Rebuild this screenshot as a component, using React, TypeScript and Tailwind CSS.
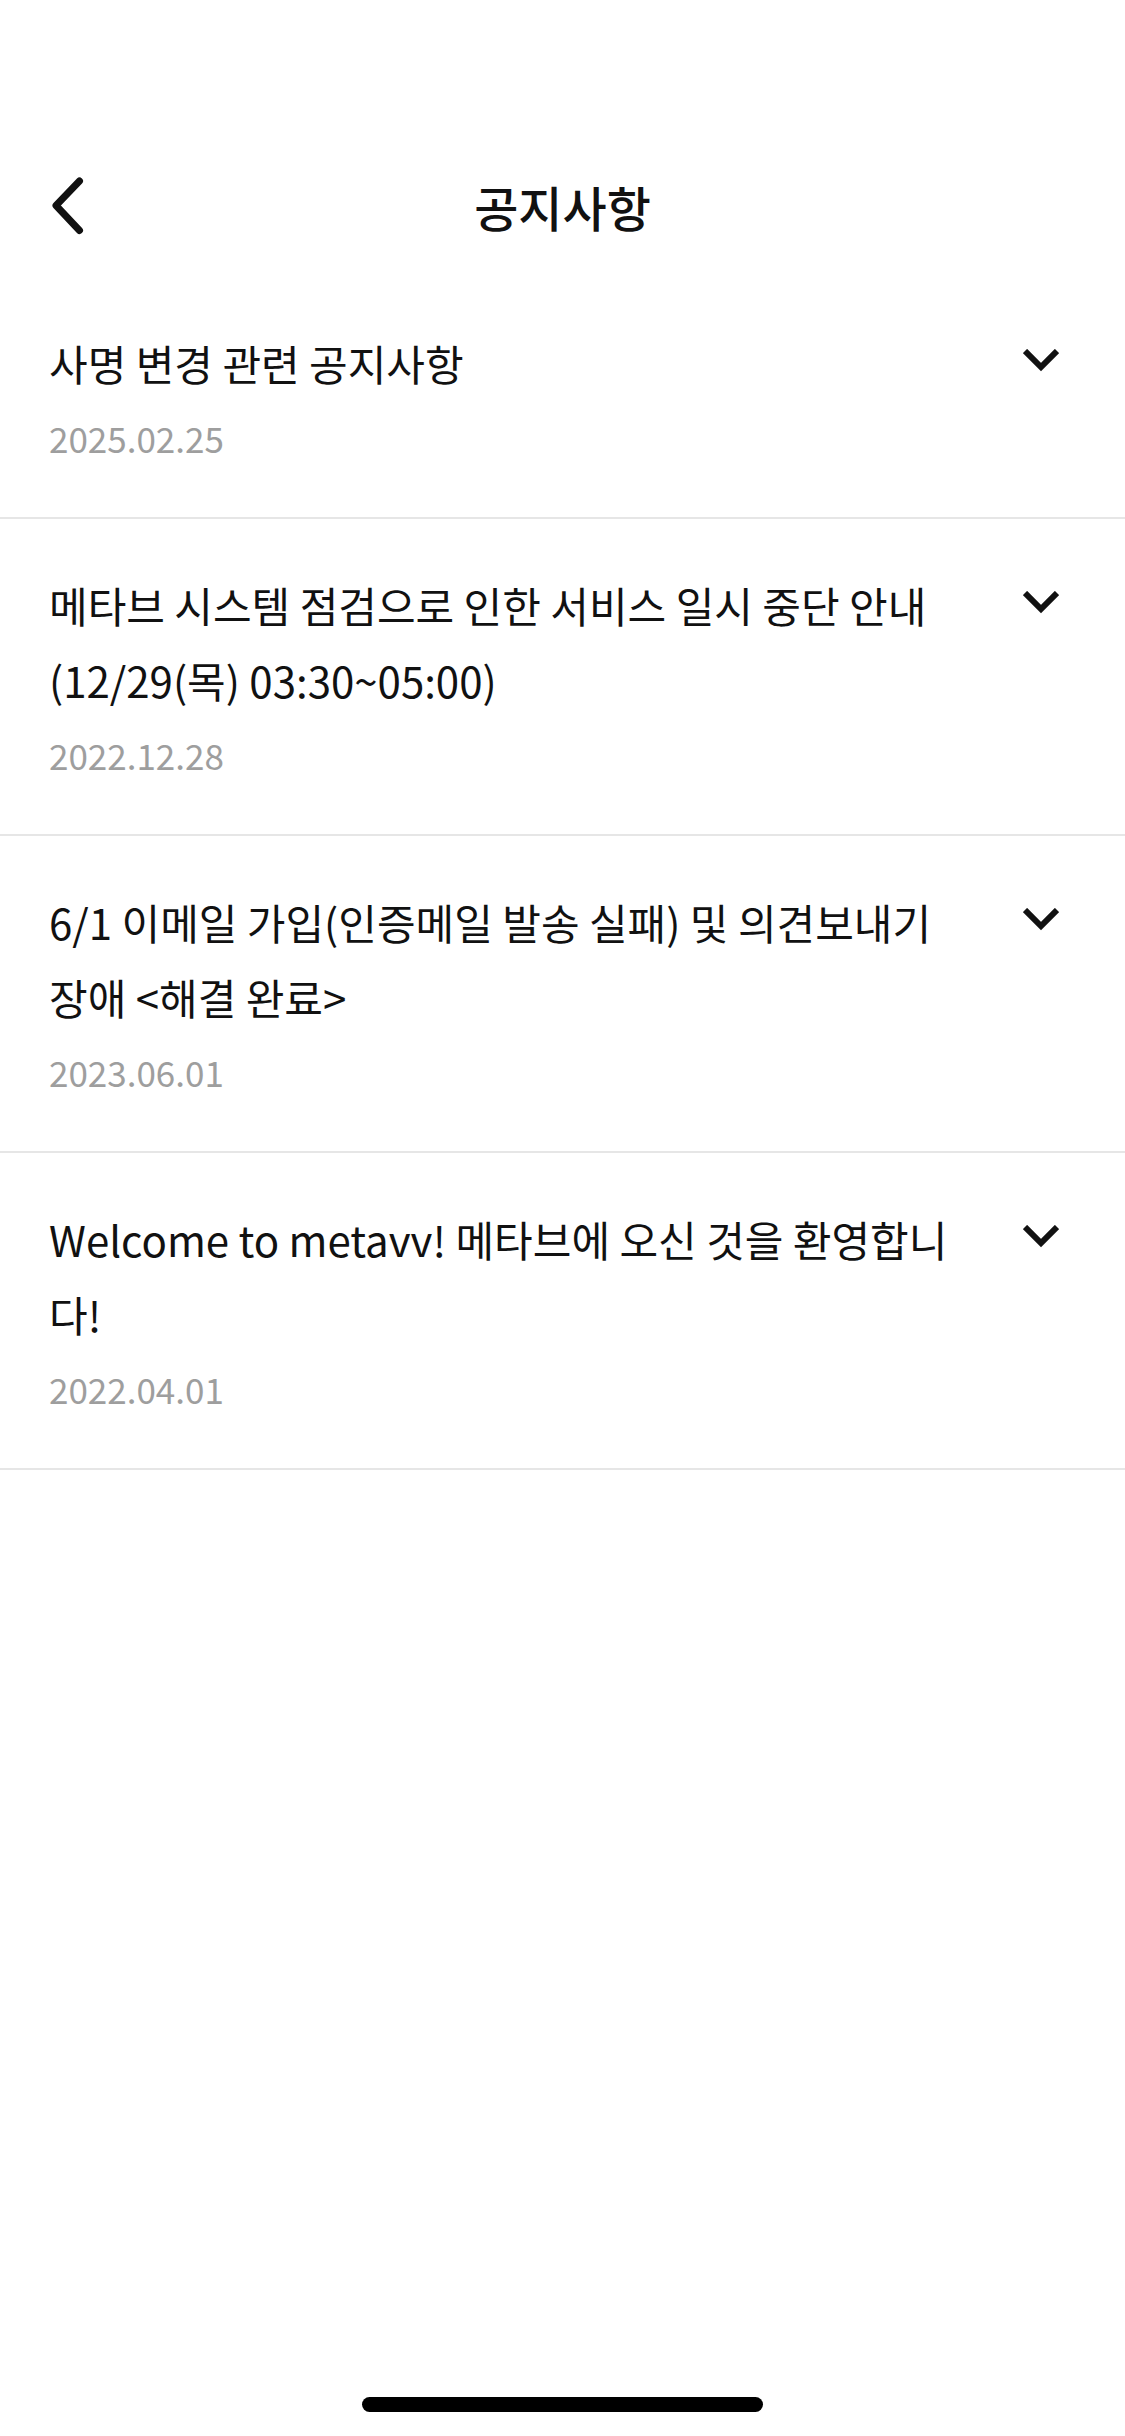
const notices = [
  { title: '사명 변경 관련 공지사항', date: '2025.02.25' },
  { title: '메타브 시스템 점검으로 인한 서비스 일시 중단 안내 (12/29(목) 03:30~05:00)', date: '2022.12.28' },
  { title: '6/1 이메일 가입(인증메일 발송 실패) 및 의견보내기 장애 <해결 완료>', date: '2023.06.01' },
  { title: 'Welcome to metavv! 메타브에 오신 것을 환영합니다!', date: '2022.04.01' },
];

function BackIcon() {
  return (
    <svg width="34" height="59" viewBox="0 0 34 59" fill="none">
      <polyline
        points="29.5,4.5 6,29 29.5,54"
        stroke="#111"
        strokeWidth="7"
        strokeLinecap="round"
        strokeLinejoin="round"
      />
    </svg>
  );
}

function ChevronDown() {
  return (
    <svg width="36" height="23" viewBox="0 0 36 23" fill="none">
      <polyline points="2,2 18,18 34,2" stroke="#111" strokeWidth="6" />
    </svg>
  );
}

export default function App() {
  return (
    <div
      className="w-[1125px] h-[2436px] bg-white flex flex-col"
      style={{ fontFamily: '"Noto Sans CJK KR", "Noto Sans", sans-serif' }}
    >
      {/* status bar 자리 */}
      <div className="h-[134px]" />

      <header className="h-[143px] relative flex items-center justify-center">
        <button className="absolute left-[50px] top-1/2 -translate-y-1/2 border-0 bg-transparent p-0">
          <BackIcon />
        </button>
        <h1 className="m-0 text-[48px] leading-none font-medium text-[#111]">공지사항</h1>
      </header>

      <ul className="m-0 p-0 list-none">
        {notices.map((n) => (
          <li key={n.date} className="flex pl-[49px] pr-[66px] pt-[48px] pb-[53px] border-b-2 border-[#e6e6e6]">
            <div className="flex-1 min-w-0">
              <p className="m-0 text-[42px] leading-[75px] text-[#111]">{n.title}</p>
              <p className="m-0 mt-[12px] text-[35px] leading-[52px] text-[#9e9e9e]">{n.date}</p>
            </div>
            <div className="ml-[67px] w-[36px] h-[70px] flex items-center">
              <ChevronDown />
            </div>
          </li>
        ))}
      </ul>

      <div className="flex-1" />
      <div className="flex justify-center pb-[24px]">
        <div className="w-[401px] h-[15px] rounded-full bg-black" />
      </div>
    </div>
  );
}
